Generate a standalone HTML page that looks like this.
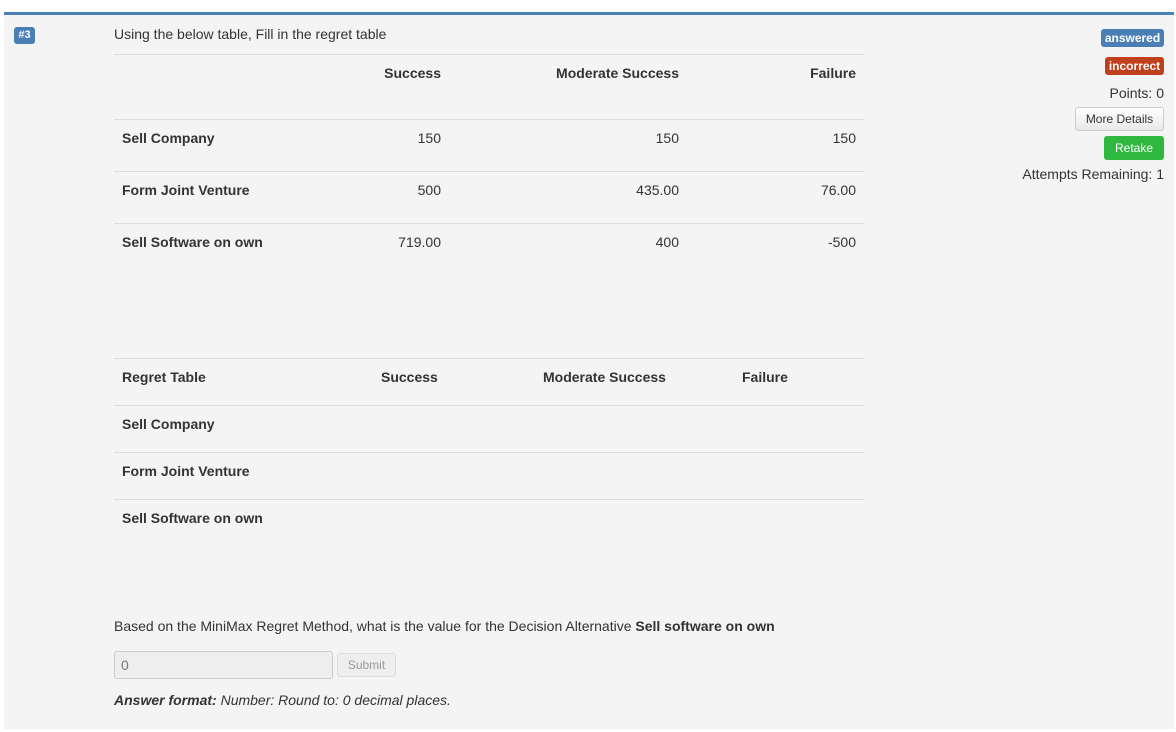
<!DOCTYPE html>
<html><head><style>
body{margin:0;width:1176px;height:732px;background:#fff;font-family:"Liberation Sans",Arial,sans-serif;font-size:14px;color:#333;position:relative;overflow:hidden}
.panel{position:absolute;left:4px;top:12px;width:1170px;height:717px;background:#f4f4f4;border-top:3px solid #4a7fb5;box-sizing:border-box}
.a{position:absolute;white-space:nowrap;line-height:16px}
.b{font-weight:bold}
.r{text-align:right}
.line{position:absolute;left:114px;width:750px;height:1px;background:#ddd}
.badge{position:absolute;color:#fff;font-weight:bold;font-size:12px;border-radius:3px;text-align:center;line-height:18px}
.btn{position:absolute;border-radius:3px;font-size:12px;text-align:center;box-sizing:border-box}
</style></head><body>
<div class="panel"></div>
<div class="badge" style="left:14px;top:27px;width:21px;height:17px;line-height:17px;background:#4a7fb5;font-size:11px">#3</div>
<div class="a" style="left:114px;top:26px">Using the below table, Fill in the regret table</div>
<div class="line" style="top:54px"></div>
<div class="line" style="top:119px"></div>
<div class="line" style="top:171px"></div>
<div class="line" style="top:223px"></div>
<div class="a b r" style="right:735px;top:65px">Success</div>
<div class="a b r" style="right:497px;top:65px">Moderate Success</div>
<div class="a b r" style="right:320px;top:65px">Failure</div>
<div class="a b" style="left:122px;top:130px">Sell Company</div>
<div class="a r" style="right:735px;top:130px">150</div>
<div class="a r" style="right:497px;top:130px">150</div>
<div class="a r" style="right:320px;top:130px">150</div>
<div class="a b" style="left:122px;top:182px">Form Joint Venture</div>
<div class="a r" style="right:735px;top:182px">500</div>
<div class="a r" style="right:497px;top:182px">435.00</div>
<div class="a r" style="right:320px;top:182px">76.00</div>
<div class="a b" style="left:122px;top:234px">Sell Software on own</div>
<div class="a r" style="right:735px;top:234px">719.00</div>
<div class="a r" style="right:497px;top:234px">400</div>
<div class="a r" style="right:320px;top:234px">-500</div>

<div class="line" style="top:358px"></div>
<div class="line" style="top:405px"></div>
<div class="line" style="top:452px"></div>
<div class="line" style="top:499px"></div>
<div class="a b" style="left:122px;top:369px">Regret Table</div>
<div class="a b" style="left:381px;top:369px">Success</div>
<div class="a b" style="left:543px;top:369px">Moderate Success</div>
<div class="a b" style="left:742px;top:369px">Failure</div>
<div class="a b" style="left:122px;top:416px">Sell Company</div>
<div class="a b" style="left:122px;top:463px">Form Joint Venture</div>
<div class="a b" style="left:122px;top:510px">Sell Software on own</div>

<div class="a" style="left:114px;top:618px">Based on the MiniMax Regret Method, what is the value for the Decision Alternative <b>Sell software on own</b></div>
<div style="position:absolute;left:114px;top:651px;width:219px;height:28px;box-sizing:border-box;border:1px solid #ccc;border-radius:3px;background:#eee;color:#777;padding:6px 6px;line-height:14px">0</div>
<div class="btn" style="left:337px;top:653px;width:59px;height:24px;line-height:22px;border:1px solid #ddd;background:#eee;color:#999">Submit</div>
<div class="a" style="left:114px;top:692px;font-style:italic"><b>Answer format:</b> Number: Round to: 0 decimal places.</div>

<div class="badge" style="left:1101px;top:29px;width:63px;background:#4a7fb5">answered</div>
<div class="badge" style="left:1105px;top:57px;width:59px;background:#c0401e">incorrect</div>
<div class="a r" style="right:12px;top:85px">Points: 0</div>
<div class="btn" style="left:1075px;top:107px;width:89px;height:24px;line-height:22px;border:1px solid #ccc;background:linear-gradient(#fff,#e8e8e8);color:#333">More Details</div>
<div class="btn" style="left:1104px;top:136px;width:60px;height:24px;line-height:24px;background:#2eb83f;color:#fff">Retake</div>
<div class="a r" style="right:12px;top:166px">Attempts Remaining: 1</div>
</body></html>
